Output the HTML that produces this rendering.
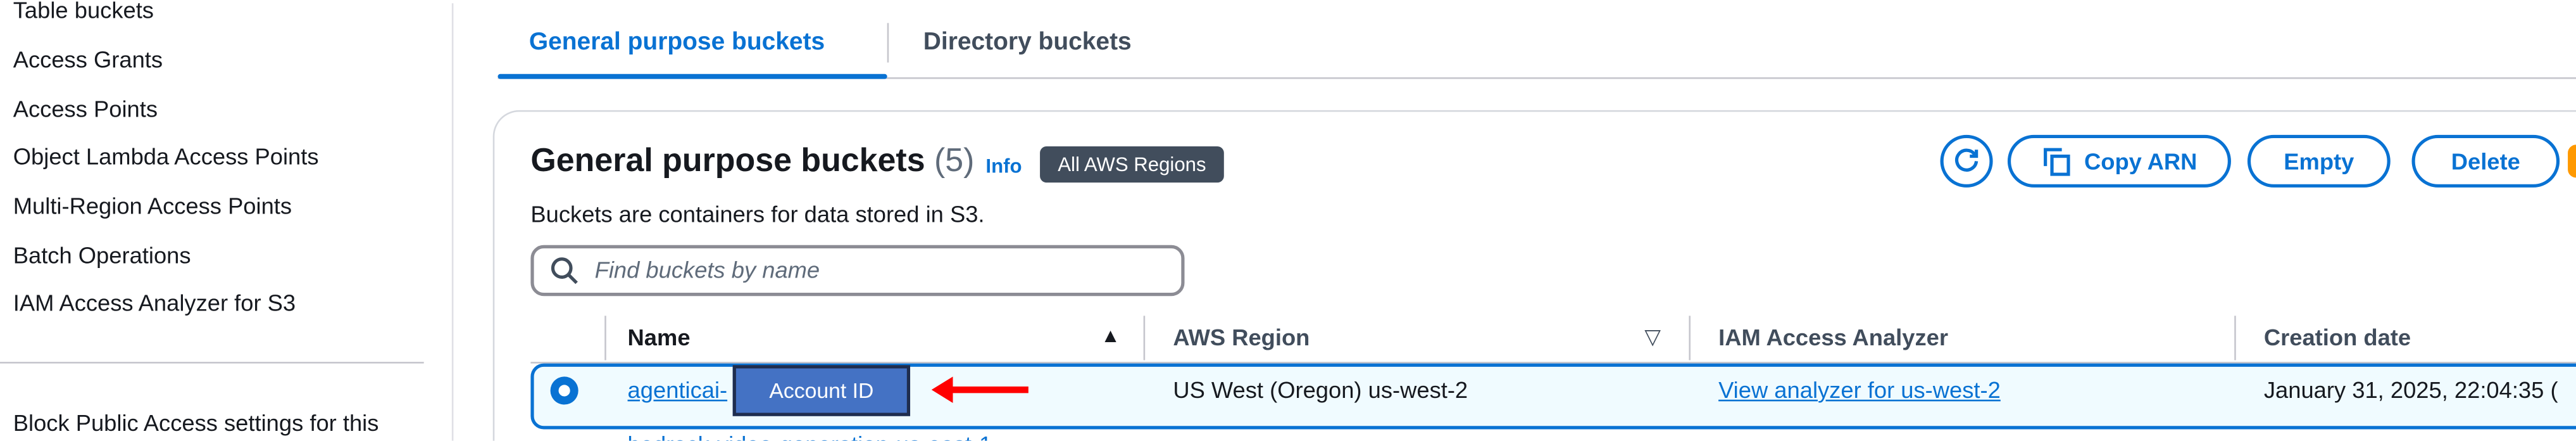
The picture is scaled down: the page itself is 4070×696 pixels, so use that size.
<!DOCTYPE html>
<html><head><meta charset="utf-8"><style>
*{margin:0;padding:0;box-sizing:border-box}
html,body{width:4070px;height:696px;overflow:hidden;background:#fff}
#w{position:relative;width:4070px;height:696px;overflow:hidden}
#s{position:absolute;left:0;top:0;width:1568px;height:268px;overflow:hidden;transform:scale(2.5957);transform-origin:0 0;font-family:"Liberation Sans",sans-serif;color:#16191f;font-size:14px}
.a{position:absolute;white-space:nowrap}
.nav{left:8px;font-size:14px;color:#16191f}
.b{font-weight:bold}
.blue{color:#0972d3}
.btn{position:absolute;top:82px;height:32px;border:2px solid #0972d3;border-radius:16px;color:#0972d3;font-weight:bold;font-size:14px;display:flex;align-items:center;justify-content:center}
.sep{position:absolute;width:1px;background:#c6c6cd}
</style></head><body><div id="w"><div id="s">
<div class="a nav" style="top:-2px">Table buckets</div>
<div class="a nav" style="top:28px">Access Grants</div>
<div class="a nav" style="top:58px">Access Points</div>
<div class="a nav" style="top:87px">Object Lambda Access Points</div>
<div class="a nav" style="top:117px">Multi-Region Access Points</div>
<div class="a nav" style="top:147px">Batch Operations</div>
<div class="a nav" style="top:176px">IAM Access Analyzer for S3</div>
<div class="a" style="left:0;top:220px;width:258px;height:1px;background:#c6c6cd"></div>
<div class="a nav" style="top:249px">Block Public Access settings for this</div>
<div class="sep" style="left:275px;top:2px;height:266px;background:#e0e0e6"></div>

<div class="a b blue" style="left:322px;top:17px;font-size:15px">General purpose buckets</div>
<div class="a b" style="left:562px;top:17px;font-size:15px;color:#414d5c">Directory buckets</div>
<div class="sep" style="left:540px;top:14px;height:24px"></div>
<div class="a" style="left:303px;top:47px;width:1265px;height:1px;background:#c6c6cd"></div>
<div class="a" style="left:303px;top:45px;width:237px;height:3px;background:#0972d3;border-radius:2px"></div>

<div class="a" style="left:300px;top:67px;width:1300px;height:240px;border:1px solid #d5d8de;border-radius:16px"></div>
<div class="a b" style="left:323px;top:87px;font-size:20px">General purpose buckets <span style="font-weight:normal;color:#5f6b7a">(5)</span></div>
<div class="a b blue" style="left:600px;top:94px;font-size:12px">Info</div>
<div class="a" style="left:633px;top:89px;width:112px;height:22px;background:#414d5c;border-radius:4px;color:#fff;font-size:12px;line-height:22px;text-align:center">All AWS Regions</div>
<div class="a" style="left:323px;top:122px;font-size:14px">Buckets are containers for data stored in S3.</div>
<div class="a" style="left:323px;top:149px;width:398px;height:31px;border:2px solid #8c8c94;border-radius:8px"></div>
<svg class="a" style="left:335px;top:156px" width="18" height="18" viewBox="0 0 18 18"><circle cx="7" cy="7" r="5.5" fill="none" stroke="#414d5c" stroke-width="2"/><path d="M11 11l5 5" stroke="#414d5c" stroke-width="2"/></svg>
<div class="a" style="left:362px;top:156px;font-style:italic;color:#5f6b7a;font-size:14px">Find buckets by name</div>

<div class="btn" style="left:1181px;width:32px"><svg width="18" height="18" viewBox="0 0 18 18"><path d="M14 5A6 6 0 1 0 15 9" fill="none" stroke="#0972d3" stroke-width="2"/><path d="M15 2v4h-4" fill="none" stroke="#0972d3" stroke-width="2"/></svg></div>
<div class="btn" style="left:1222px;width:136px"><svg width="18" height="18" viewBox="0 0 18 18" style="margin-right:8px"><path d="M2 12V2h10" fill="none" stroke="#0972d3" stroke-width="2"/><rect x="6" y="6" width="10" height="11" fill="none" stroke="#0972d3" stroke-width="2"/></svg>Copy ARN</div>
<div class="btn" style="left:1368px;width:87px">Empty</div>
<div class="btn" style="left:1468px;width:90px">Delete</div>
<div class="a" style="left:1563px;top:88px;width:10px;height:20px;border-radius:10px;background:#ff9900"></div>

<div class="sep" style="left:368px;top:192px;height:27px"></div>
<div class="sep" style="left:696px;top:192px;height:27px"></div>
<div class="sep" style="left:1028px;top:192px;height:27px"></div>
<div class="sep" style="left:1360px;top:192px;height:27px"></div>
<div class="a b" style="left:382px;top:197px">Name</div>
<div class="a" style="left:670px;top:197px;font-size:12px">▲</div>
<div class="a b" style="left:714px;top:197px;color:#414d5c">AWS Region</div>
<div class="a" style="left:1001px;top:197px;font-size:13px;color:#414d5c">▽</div>
<div class="a b" style="left:1046px;top:197px;color:#414d5c">IAM Access Analyzer</div>
<div class="a b" style="left:1378px;top:197px;color:#414d5c">Creation date</div>
<div class="a" style="left:323px;top:220px;width:1245px;height:1px;background:#c6c6cd"></div>

<div class="a" style="left:323px;top:221px;width:1260px;height:40px;border:2px solid #0972d3;border-radius:8px;background:#f0fbff"></div>
<div class="a" style="left:335px;top:229px;width:17px;height:17px;border-radius:50%;background:#0972d3"></div>
<div class="a" style="left:340px;top:234px;width:7px;height:7px;border-radius:50%;background:#fff"></div>
<div class="a blue" style="left:382px;top:229px;text-decoration:underline">agenticai-</div>
<div class="a" style="left:446px;top:222px;width:108px;height:31px;background:#4472c4;border:2px solid #1f2d4e;color:#fff;font-size:13px;line-height:27px;text-align:center">Account ID</div>
<svg class="a" style="left:566px;top:228px" width="60" height="18" viewBox="0 0 60 18"><path d="M60 7H14V1L1 9l13 8v-6h46z" fill="#ff0000"/></svg>
<div class="a" style="left:714px;top:229px">US West (Oregon) us-west-2</div>
<div class="a blue" style="left:1046px;top:229px;text-decoration:underline">View analyzer for us-west-2</div>
<div class="a" style="left:1378px;top:229px">January 31, 2025, 22:04:35 (</div>
<div class="a blue" style="left:382px;top:262px;text-decoration:underline">bedrock-video-generation-us-east-1</div>
</div></div></body></html>
